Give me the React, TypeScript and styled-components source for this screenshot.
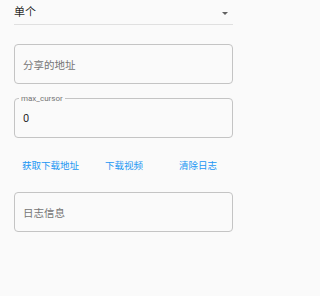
import React from 'react';
import styled, { createGlobalStyle } from 'styled-components';

const GlobalStyle = createGlobalStyle`
  html, body {
    margin: 0;
    padding: 0;
    background: #fafafa;
  }
  body {
    font-family: Roboto, "Noto Sans CJK SC", sans-serif;
  }
`;

const Page = styled.div`
  width: 247px;
  box-sizing: border-box;
  padding: 0 14px;
  display: flex;
  flex-direction: column;
`;

const Select = styled.div`
  height: 25px;
  box-sizing: border-box;
  padding-top: 6px;
  display: flex;
  justify-content: space-between;
  align-items: flex-start;
  border-bottom: 1px solid #e0e0e0;
  font-size: 11px;
  line-height: 14px;
  color: rgba(0, 0, 0, 0.87);
`;

const Caret = styled.span`
  width: 0;
  height: 0;
  margin: 6px 5px 0 0;
  border-left: 3px solid transparent;
  border-right: 3px solid transparent;
  border-top: 3px solid #616161;
`;

const Field = styled.div<{ $top: number }>`
  position: relative;
  margin-top: ${(p) => p.$top}px;
  height: 40px;
  box-sizing: border-box;
  border: 1px solid #c4c4c4;
  border-radius: 4px;
  padding: 0 8px;
  display: flex;
  align-items: center;
`;

const FloatLabel = styled.span`
  position: absolute;
  top: -5px;
  left: 4px;
  padding: 0 2px;
  background: #fafafa;
  font-size: 8px;
  line-height: 9px;
  color: #757575;
`;

const Placeholder = styled.span`
  font-size: 10.5px;
  color: #757575;
`;

const Value = styled.span`
  font-size: 11px;
  color: rgba(0, 0, 0, 0.87);
`;

const ButtonRow = styled.div`
  height: 54px;
  display: flex;
  align-items: center;
`;

const TextButton = styled.button<{ $left: number }>`
  margin-left: ${(p) => p.$left}px;
  padding: 0;
  border: none;
  background: none;
  color: #2196f3;
  font-family: Roboto, "Noto Sans CJK SC", sans-serif;
  font-size: 9.5px;
  cursor: pointer;
`;

export default function App() {
  return (
    <>
      <GlobalStyle />
      <Page>
        <Select>
          <span>单个</span>
          <Caret />
        </Select>
        <Field $top={19}>
          <Placeholder>分享的地址</Placeholder>
        </Field>
        <Field $top={14}>
          <FloatLabel>max_cursor</FloatLabel>
          <Value>0</Value>
        </Field>
        <ButtonRow>
          <TextButton $left={8}>获取下载地址</TextButton>
          <TextButton $left={26}>下载视频</TextButton>
          <TextButton $left={36}>清除日志</TextButton>
        </ButtonRow>
        <Field $top={0}>
          <Placeholder>日志信息</Placeholder>
        </Field>
      </Page>
    </>
  );
}
